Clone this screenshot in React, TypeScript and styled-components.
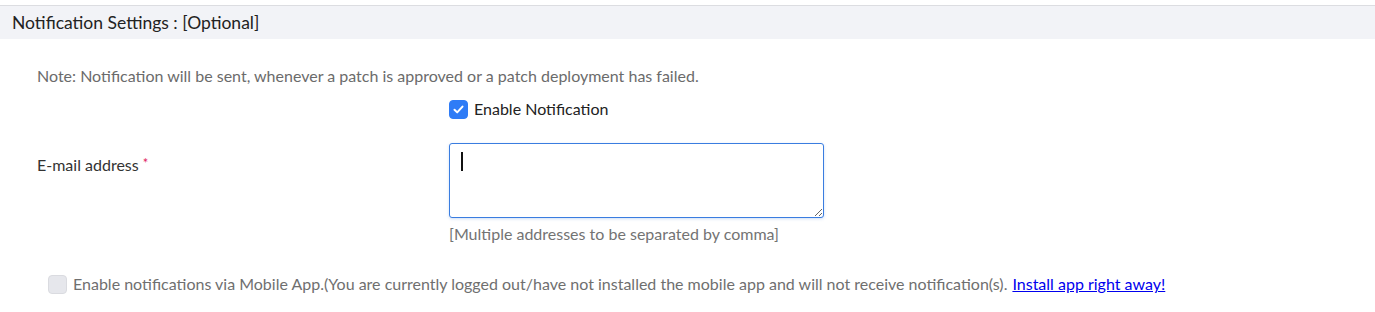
import React from 'react';
import styled, { createGlobalStyle } from 'styled-components';

const GlobalStyle = createGlobalStyle`
    body {
        margin: 0;
        background: #ffffff;
        font-family: Lato, "Open Sans", Arial, sans-serif;
    }
`;

const Page = styled.div`
    padding-top: 5px;
    width: 1375px;
`;

const SectionHeader = styled.div`
    border-top: 1px solid #dcdde1;
    background: #f2f3f7;
    height: 33px;
    display: flex;
    align-items: center;
    padding-left: 12px;
    font-size: 17.5px;
    color: #222;
`;

const Form = styled.div`
    display: grid;
    grid-template-columns: 449px 1fr;
    padding-top: 27px;
`;

const Note = styled.div`
    grid-column: 1 / 3;
    padding-left: 37px;
    font-size: 16px;
    line-height: 20px;
    color: #6b6b6b;
`;

const Field = styled.div<{ $gap?: number }>`
    grid-column: 2;
    margin-top: ${p => p.$gap ?? 0}px;
`;

const Label = styled.div`
    grid-column: 1;
    margin-top: 24px;
    padding: 10px 0 0 37px;
    font-size: 16px;
    line-height: 20px;
    color: #333;
`;

const Required = styled.span`
    color: #e0245e;
    margin-left: 4px;
    font-size: 13px;
    vertical-align: 3px;
`;

const CheckRow = styled.label<{ $muted?: boolean }>`
    display: flex;
    align-items: center;
    gap: 6px;
    font-size: 16px;
    line-height: 20px;
    color: ${p => (p.$muted ? '#6f6f6f' : '#222')};
`;

const Box = styled.span<{ $checked?: boolean }>`
    width: 19px;
    height: 19px;
    border-radius: 4px;
    box-sizing: border-box;
    display: inline-flex;
    align-items: center;
    justify-content: center;
    background: ${p => (p.$checked ? '#2f7cf6' : '#e6e7ec')};
    border: 1px solid ${p => (p.$checked ? '#2f7cf6' : '#dadbe0')};
    flex-shrink: 0;
`;

const InputWrap = styled.div`
    position: relative;
    width: 375px;
`;

const TextArea = styled.textarea`
    display: block;
    box-sizing: border-box;
    width: 375px;
    height: 75px;
    margin: 0;
    padding: 8px 11px;
    border: 1px solid #3a7de0;
    border-radius: 3px;
    box-shadow: 0 1px 3px rgba(58, 125, 224, 0.25);
    outline: none;
    font-family: Lato, Arial, sans-serif;
    font-size: 16px;
    color: #111;
    caret-color: #000;
    resize: vertical;
`;

const Caret = styled.span`
    position: absolute;
    left: 12px;
    top: 9px;
    width: 2px;
    height: 19px;
    background: #111;
    pointer-events: none;
`;

const Hint = styled.div`
    margin-top: 6px;
    font-size: 16px;
    line-height: 20px;
    color: #737373;
`;

const MobileRow = styled.div`
    grid-column: 1 / 3;
    margin-top: 30px;
    padding-left: 48px;
`;

const Link = styled.a`
    color: #0000ee;
    text-decoration: underline;
    margin-left: 5px;
`;

const Check = () => (
    <svg width="13" height="13" viewBox="0 0 13 13">
        <path d="M2.5 6.8 L5.2 9.4 L10.5 3.6" fill="none" stroke="#fff" strokeWidth="2" strokeLinecap="round" strokeLinejoin="round" />
    </svg>
);

export default function App() {
    return (
        <Page>
            <GlobalStyle />
            <SectionHeader>Notification Settings : [Optional]</SectionHeader>
            <Form>
                <Note>Note: Notification will be sent, whenever a patch is approved or a patch deployment has failed.</Note>
                <Field $gap={13}>
                    <CheckRow>
                        <Box $checked>
                            <Check />
                        </Box>
                        Enable Notification
                    </CheckRow>
                </Field>
                <Label>
                    E-mail address<Required>*</Required>
                </Label>
                <Field $gap={24}>
                    <InputWrap>
                        <TextArea />
                        <Caret />
                    </InputWrap>
                    <Hint>[Multiple addresses to be separated by comma]</Hint>
                </Field>
                <MobileRow>
                    <CheckRow $muted>
                        <Box />
                        <span>
                            Enable notifications via Mobile App.(You are currently logged out/have not installed the mobile app and will not receive notification(s).
                            <Link href="#">Install app right away!</Link>
                        </span>
                    </CheckRow>
                </MobileRow>
            </Form>
        </Page>
    );
}
